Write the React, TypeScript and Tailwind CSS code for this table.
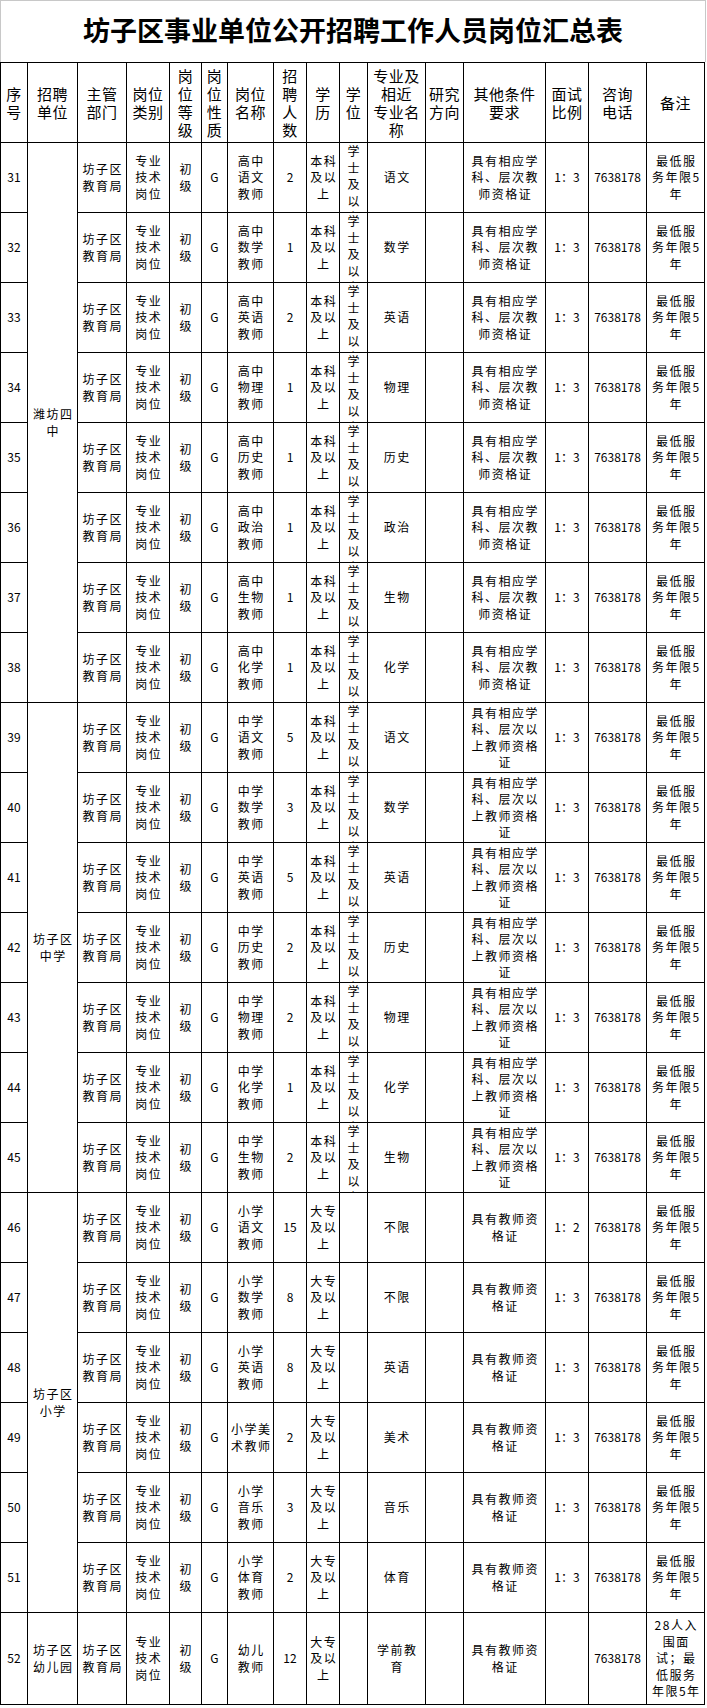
import React from "react";

type Row = {
  no: number;
  name: string[];
  count: string;
  edu: string[];
  degree: boolean;
  major: string[];
  req: string[];
  ratio: string;
  note: string[];
};

const REQ_A = ["具有相应学", "科、层次教", "师资格证"];
const REQ_B = ["具有相应学", "科、层次以", "上教师资格", "证"];
const REQ_C = ["具有教师资", "格证"];
const NOTE = ["最低服", "务年限5", "年"];
const BK = ["本科", "及以", "上"];
const DZ = ["大专", "及以", "上"];

const rows: Row[] = [
  { no: 31, name: ["高中", "语文", "教师"], count: "2", edu: BK, degree: true, major: ["语文"], req: REQ_A, ratio: "1：3", note: NOTE },
  { no: 32, name: ["高中", "数学", "教师"], count: "1", edu: BK, degree: true, major: ["数学"], req: REQ_A, ratio: "1：3", note: NOTE },
  { no: 33, name: ["高中", "英语", "教师"], count: "2", edu: BK, degree: true, major: ["英语"], req: REQ_A, ratio: "1：3", note: NOTE },
  { no: 34, name: ["高中", "物理", "教师"], count: "1", edu: BK, degree: true, major: ["物理"], req: REQ_A, ratio: "1：3", note: NOTE },
  { no: 35, name: ["高中", "历史", "教师"], count: "1", edu: BK, degree: true, major: ["历史"], req: REQ_A, ratio: "1：3", note: NOTE },
  { no: 36, name: ["高中", "政治", "教师"], count: "1", edu: BK, degree: true, major: ["政治"], req: REQ_A, ratio: "1：3", note: NOTE },
  { no: 37, name: ["高中", "生物", "教师"], count: "1", edu: BK, degree: true, major: ["生物"], req: REQ_A, ratio: "1：3", note: NOTE },
  { no: 38, name: ["高中", "化学", "教师"], count: "1", edu: BK, degree: true, major: ["化学"], req: REQ_A, ratio: "1：3", note: NOTE },
  { no: 39, name: ["中学", "语文", "教师"], count: "5", edu: BK, degree: true, major: ["语文"], req: REQ_B, ratio: "1：3", note: NOTE },
  { no: 40, name: ["中学", "数学", "教师"], count: "3", edu: BK, degree: true, major: ["数学"], req: REQ_B, ratio: "1：3", note: NOTE },
  { no: 41, name: ["中学", "英语", "教师"], count: "5", edu: BK, degree: true, major: ["英语"], req: REQ_B, ratio: "1：3", note: NOTE },
  { no: 42, name: ["中学", "历史", "教师"], count: "2", edu: BK, degree: true, major: ["历史"], req: REQ_B, ratio: "1：3", note: NOTE },
  { no: 43, name: ["中学", "物理", "教师"], count: "2", edu: BK, degree: true, major: ["物理"], req: REQ_B, ratio: "1：3", note: NOTE },
  { no: 44, name: ["中学", "化学", "教师"], count: "1", edu: BK, degree: true, major: ["化学"], req: REQ_B, ratio: "1：3", note: NOTE },
  { no: 45, name: ["中学", "生物", "教师"], count: "2", edu: BK, degree: true, major: ["生物"], req: REQ_B, ratio: "1：3", note: NOTE },
  { no: 46, name: ["小学", "语文", "教师"], count: "15", edu: DZ, degree: false, major: ["不限"], req: REQ_C, ratio: "1：2", note: NOTE },
  { no: 47, name: ["小学", "数学", "教师"], count: "8", edu: DZ, degree: false, major: ["不限"], req: REQ_C, ratio: "1：3", note: NOTE },
  { no: 48, name: ["小学", "英语", "教师"], count: "8", edu: DZ, degree: false, major: ["英语"], req: REQ_C, ratio: "1：3", note: NOTE },
  { no: 49, name: ["小学美", "术教师"], count: "2", edu: DZ, degree: false, major: ["美术"], req: REQ_C, ratio: "1：3", note: NOTE },
  { no: 50, name: ["小学", "音乐", "教师"], count: "3", edu: DZ, degree: false, major: ["音乐"], req: REQ_C, ratio: "1：3", note: NOTE },
  { no: 51, name: ["小学", "体育", "教师"], count: "2", edu: DZ, degree: false, major: ["体育"], req: REQ_C, ratio: "1：3", note: NOTE },
  {
    no: 52,
    name: ["幼儿", "教师"],
    count: "12",
    edu: DZ,
    degree: false,
    major: ["学前教", "育"],
    req: REQ_C,
    ratio: "",
    note: ["28人入", "围面", "试；最", "低服务", "年限5年"],
  },
];

// merged 招聘单位 cells: first row no -> [rowspan, lines]
const units: Record<number, [number, string[]]> = {
  31: [8, ["潍坊四", "中"]],
  39: [7, ["坊子区", "中学"]],
  46: [6, ["坊子区", "小学"]],
  52: [1, ["坊子区", "幼儿园"]],
};

const cols: { w: string; head: string[] }[] = [
  { w: "w-[27px]", head: ["序", "号"] },
  { w: "w-[50px]", head: ["招聘", "单位"] },
  { w: "w-[49px]", head: ["主管", "部门"] },
  { w: "w-[43px]", head: ["岗位", "类别"] },
  { w: "w-[32px]", head: ["岗", "位", "等", "级"] },
  { w: "w-[26px]", head: ["岗", "位", "性", "质"] },
  { w: "w-[46px]", head: ["岗位", "名称"] },
  { w: "w-[33px]", head: ["招", "聘", "人", "数"] },
  { w: "w-[33px]", head: ["学", "历"] },
  { w: "w-[28px]", head: ["学", "位"] },
  { w: "w-[58px]", head: ["专业及", "相近", "专业名", "称"] },
  { w: "w-[38px]", head: ["研究", "方向"] },
  { w: "w-[82px]", head: ["其他条件", "要求"] },
  { w: "w-[43px]", head: ["面试", "比例"] },
  { w: "w-[58px]", head: ["咨询", "电话"] },
  { w: "w-[58px]", head: ["备注"] },
];

function Lines({ lines }: { lines: string[] }) {
  return (
    <>
      {lines.map((l, i) => (
        <div key={i} className="whitespace-nowrap">
          {l}
        </div>
      ))}
    </>
  );
}

// plain body cell, text centred both ways
function Td({ lines, cjk = true, rowSpan }: { lines: string[]; cjk?: boolean; rowSpan?: number }) {
  return (
    <td
      rowSpan={rowSpan}
      className={`border border-black p-0 text-center align-middle text-[12px] leading-[16.5px] ${
        cjk ? "tracking-[1.5px] pl-[1.5px]" : ""
      }`}
    >
      <Lines lines={lines} />
    </td>
  );
}

export default function App() {
  return (
    <div className="w-[707px] bg-white pb-[3px] font-['Noto_Sans_CJK_SC',sans-serif] text-black">
      {/* Title */}
      <div className="flex h-[62px] w-[706px] items-center justify-center border-l border-r border-t border-[#c8c8c8] pb-[2px] text-[27px] font-bold">
        坊子区事业单位公开招聘工作人员岗位汇总表
      </div>

      <table className="w-[705px] table-fixed border-collapse">
        <colgroup>
          {cols.map((c, i) => (
            <col key={i} className={c.w} />
          ))}
        </colgroup>
        <thead>
          <tr className="h-[80px]">
            {cols.map((c, i) => (
              <th
                key={i}
                className="border border-black p-0 text-center align-middle text-[15px] font-normal leading-[18px] tracking-[0.5px]"
              >
                <Lines lines={c.head} />
              </th>
            ))}
          </tr>
        </thead>
        <tbody>
          {rows.map((r) => {
            const unit = units[r.no];
            const tall = r.no === 52;
            return (
              <tr key={r.no} className={tall ? "h-[92px]" : "h-[70px]"}>
                <Td lines={[String(r.no)]} cjk={false} />
                {unit && <Td lines={unit[1]} rowSpan={unit[0]} />}
                <Td lines={["坊子区", "教育局"]} />
                <Td lines={["专业", "技术", "岗位"]} />
                <Td lines={["初", "级"]} />
                <Td lines={["G"]} cjk={false} />
                <Td lines={r.name} />
                <Td lines={[r.count]} cjk={false} />
                <Td lines={r.edu} />
                {/* 学位: overflowing text, clipped at the cell edge */}
                <td className="border border-black p-0 align-top text-[12px] leading-[16.5px]">
                  <div className={`${tall ? "h-[91px]" : "h-[69px]"} overflow-hidden text-center`}>
                    {r.degree && <Lines lines={["学", "士", "及", "以", "上"]} />}
                  </div>
                </td>
                <Td lines={r.major} />
                <Td lines={[]} />
                <Td lines={r.req} />
                <Td lines={[r.ratio]} cjk={false} />
                <Td lines={["7638178"]} cjk={false} />
                <Td lines={r.note} />
              </tr>
            );
          })}
        </tbody>
      </table>
    </div>
  );
}
